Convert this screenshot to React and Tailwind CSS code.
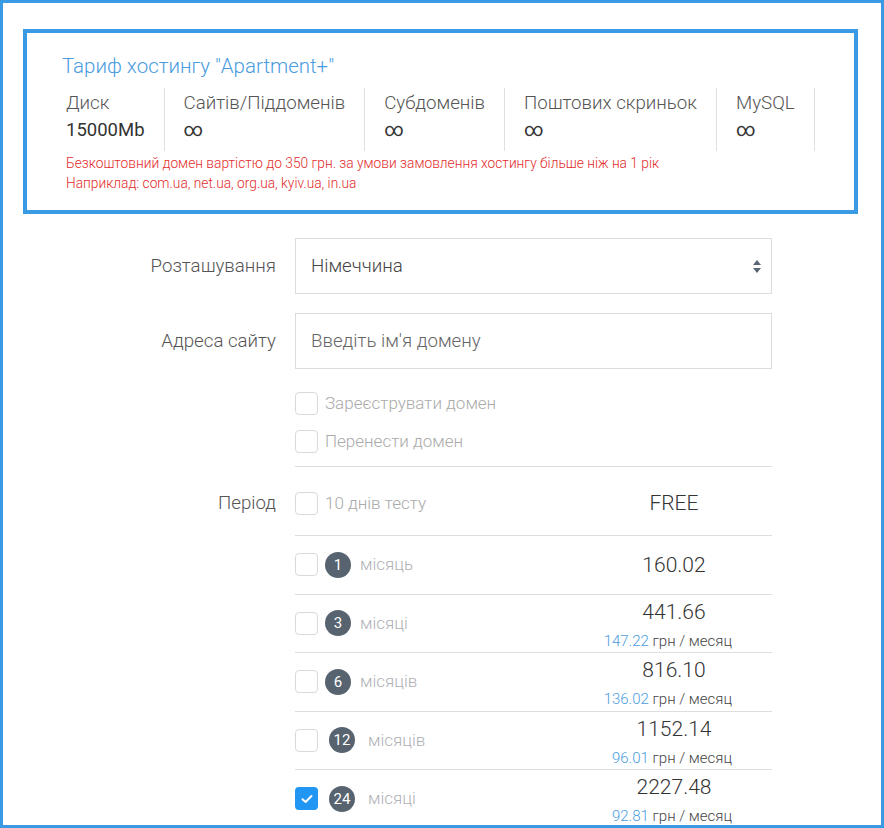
const stats = [
  { label: "Диск", value: "15000Mb", first: true },
  { label: "Сайтів/Піддоменів", value: "∞" },
  { label: "Субдоменів", value: "∞" },
  { label: "Поштових скриньок", value: "∞" },
  { label: "MySQL", value: "∞" },
];

const periods = [
  { n: "1", word: "місяць", price: "160.02" },
  { n: "3", word: "місяці", price: "441.66", per: "147.22" },
  { n: "6", word: "місяців", price: "816.10", per: "136.02" },
  { n: "12", word: "місяців", price: "1152.14", per: "96.01", wide: true },
  { n: "24", word: "місяці", price: "2227.48", per: "92.81", wide: true, checked: true },
];

function Box({ checked }) {
  if (checked) {
    return (
      <span className="w-[23px] h-[23px] shrink-0 rounded-[4px] bg-[#2196f3] flex items-center justify-center">
        <svg width="12" height="10" viewBox="0 0 12 10" fill="none">
          <path d="M1.5 5.2 L4.6 8 L10.5 2" stroke="white" strokeWidth="2" strokeLinecap="round" strokeLinejoin="round" />
        </svg>
      </span>
    );
  }
  return <span className="w-[23px] h-[23px] shrink-0 rounded-[4px] border border-[#dadada] bg-white" />;
}

export default function App() {
  return (
    <div className="w-[884px] h-[828px] overflow-hidden bg-white border-[3px] border-[#3a9be4] font-['Roboto',sans-serif] font-light">
      {/* Тариф */}
      <div className="mt-[26px] ml-[20px] w-[835px] h-[185px] border-4 border-[#3a9be4] pl-[35px] pt-[20px]">
        <div className="text-[20.5px] leading-[26px] text-[#4a9ce0] font-light">Тариф хостингу "Apartment+"</div>
        <div className="flex mt-[9px]">
          {stats.map((s) => (
            <div key={s.label} className={`border-r border-[#e0e0e0] h-[63px] pr-[19px] ${s.first ? "pl-[4px]" : "pl-[19px]"}`}>
              <div className="text-[18.7px] leading-[26px] text-[#555] mt-[2px]">{s.label}</div>
              <div className={`leading-[28px] text-[#333] font-normal ${s.first ? "text-[18.5px]" : "text-[19px]"}`}>{s.value}</div>
            </div>
          ))}
        </div>
        <div className="pl-[4px] text-[13.75px] leading-[20px] text-[#e32b2b] mt-[2px]">
          <div>Безкоштовний домен вартістю до 350 грн. за умови замовлення хостингу більше ніж на 1 рік</div>
          <div>Наприклад: com.ua, net.ua, org.ua, kyiv.ua, in.ua</div>
        </div>
      </div>

      {/* Форма */}
      <div className="ml-[20px] mt-[24px] grid grid-cols-[253px_477px] gap-x-[19px] text-[18.7px]">
        <div className="h-[56px] flex items-center justify-end text-[#555]">Розташування</div>
        <div className="h-[56px] border border-[#dcdcdc] flex items-center justify-between pl-[15px] pr-[9px] text-[#444]">
          <span>Німеччина</span>
          <svg width="10" height="16" viewBox="0 0 10 16">
            <path d="M5 2 L9 7 L1 7 Z" fill="#5a6673" />
            <path d="M1 10 L9 10 L5 15 Z" fill="#5a6673" />
          </svg>
        </div>

        <div className="h-[56px] mt-[19px] flex items-center justify-end text-[#555]">Адреса сайту</div>
        <div className="h-[56px] mt-[19px] border border-[#dcdcdc] flex items-center pl-[15px] text-[#666]">
          Введіть ім'я домену
        </div>

        <div />
        <div className="pt-[23px] border-b border-[#dedede] pb-[13px]">
          <div className="flex items-center gap-[7px] h-[23px] text-[17px] text-[#aaa]">
            <Box />
            <span>Зареєструвати домен</span>
          </div>
          <div className="flex items-center gap-[7px] h-[23px] mt-[15px] text-[17px] text-[#aaa]">
            <Box />
            <span>Перенести домен</span>
          </div>
        </div>

        <div className="flex justify-end text-[#555] mt-[24px] h-[24px] items-center">Період</div>
        <div>
          <div className="mt-[5px] h-[64px] border-b border-[#dedede] flex items-center">
            <div className="flex items-center gap-[7px] flex-1 text-[17px] text-[#aaa]">
              <Box />
              <span>10 днів тесту</span>
            </div>
            <div className="w-[116px] mr-[40px] text-center text-[21px] text-[#333]">FREE</div>
          </div>
          {periods.map((p) => (
            <div key={p.n} className="h-[58.5px] border-b border-[#dedede] flex items-center">
              <div className="flex items-center flex-1">
                <Box checked={p.checked} />
                <span className={`w-[26px] h-[26px] rounded-full bg-[#57636f] text-white text-[15px] font-normal flex items-center justify-center ${p.wide ? "ml-[11px]" : "ml-[7px]"}`}>
                  {p.n}
                </span>
                <span className={`text-[17px] text-[#b0b0b6] ${p.wide ? "ml-[13px]" : "ml-[9px]"}`}>{p.word}</span>
              </div>
              <div className={`w-[116px] mr-[40px] flex flex-col ${p.per ? "self-start pt-[3px]" : ""}`}>
                <div className="text-center text-[21px] leading-[28px] text-[#333]">{p.price}</div>
                {p.per && (
                  <div className="flex justify-end whitespace-nowrap text-[15px] leading-[20px] mt-[5px]">
                    <span className="text-[#4a9ce0]">{p.per}</span>
                    <span className="text-[#444]">&nbsp;грн / месяц</span>
                  </div>
                )}
              </div>
            </div>
          ))}
        </div>
      </div>
    </div>
  );
}
